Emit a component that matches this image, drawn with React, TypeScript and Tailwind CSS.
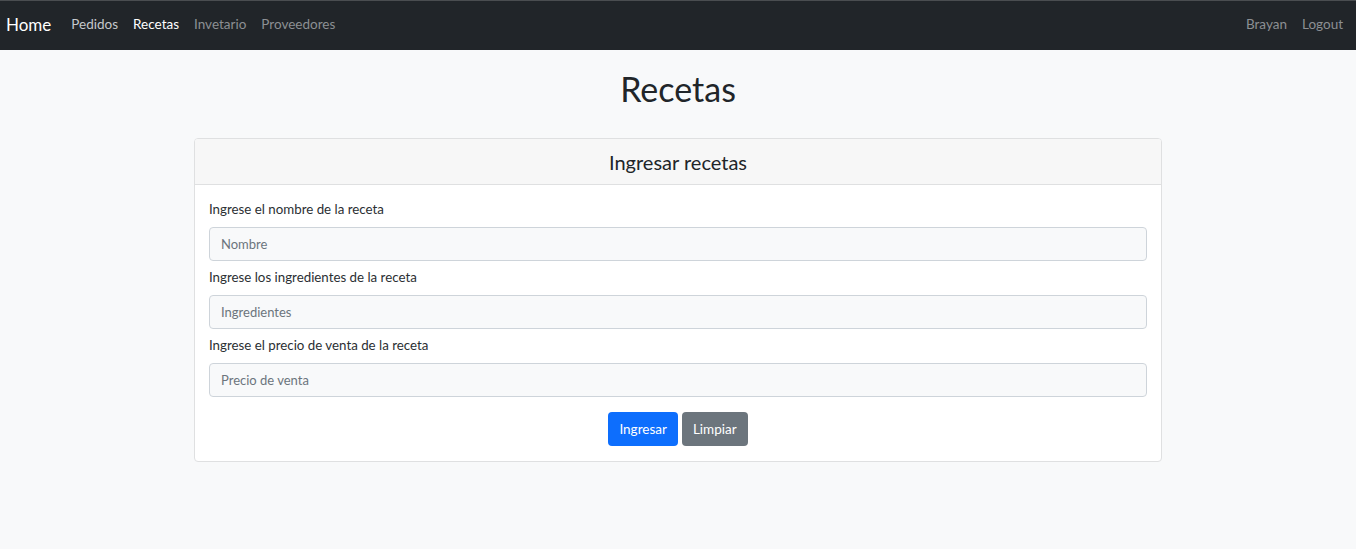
import { useState } from "react";

const navLinks = [
  { label: "Pedidos", cls: "text-[#c5c8cc]" },
  { label: "Recetas", cls: "text-white" },
  { label: "Invetario", cls: "text-[#8c8f93]" },
  { label: "Proveedores", cls: "text-[#8c8f93]" },
];

const fields = [
  { label: "Ingrese el nombre de la receta", placeholder: "Nombre" },
  { label: "Ingrese los ingredientes de la receta", placeholder: "Ingredientes" },
  { label: "Ingrese el precio de venta de la receta", placeholder: "Precio de venta" },
];

const App = () => {
  const [values, setValues] = useState<string[]>(["", "", ""]);

  return (
    <div className="min-h-screen bg-[#f8f9fa] font-['Lato','Noto_Sans',sans-serif] text-[#212529]">
      {/* Barra de navegación */}
      <nav className="h-[50px] bg-[#212529] border-t border-[#4a4d50] flex items-center justify-between pl-[6px] pr-[13px] pb-[2px]">
        <div className="flex items-center">
          <span className="text-white text-[17px] mr-[20px]">Home</span>
          <div className="flex items-center gap-[15px] text-[13.5px]">
            {navLinks.map((l) => (
              <span key={l.label} className={l.cls}>{l.label}</span>
            ))}
          </div>
        </div>
        <div className="flex items-center gap-[15px] text-[13.5px] text-[#8c8f93]">
          <span>Brayan</span>
          <span>Logout</span>
        </div>
      </nav>

      <h1 className="text-center text-[34px] leading-none mt-[22px] mb-[32px]">Recetas</h1>

      {/* Tarjeta del formulario */}
      <div className="mx-auto w-[968px] bg-white border border-[#dfe0e1] rounded-[4px] overflow-hidden">
        <div className="h-[46px] bg-[#f7f7f7] border-b border-[#dfe0e1] flex items-center justify-center text-[20px]">
          Ingresar recetas
        </div>
        <div className="px-[14px] pt-[14px] pb-[15px]">
          {fields.map((f, i) => (
            <div key={f.label} className="mb-[6px]">
              <label className="block text-[13.3px] leading-[20px] mb-[8px] text-[#2b2f33]">{f.label}</label>
              <input
                className="w-full h-[34px] bg-[#f8f9fa] border border-[#ced4da] rounded-[4px] px-[11px] text-[13px] outline-none placeholder:text-[#6c757d]"
                placeholder={f.placeholder}
                value={values[i]}
                onChange={(e) => {
                  const next = [...values];
                  next[i] = e.target.value;
                  setValues(next);
                }}
              />
            </div>
          ))}
          <div className="flex justify-center gap-[4px] pt-[9px]">
            <button className="h-[34px] px-[11px] bg-[#0d6efd] text-white text-[13.5px] rounded-[4px]">Ingresar</button>
            <button
              className="h-[34px] px-[11px] bg-[#6c757d] text-white text-[13.5px] rounded-[4px]"
              onClick={() => setValues(["", "", ""])}
            >
              Limpiar
            </button>
          </div>
        </div>
      </div>
    </div>
  );
};

export default App;
